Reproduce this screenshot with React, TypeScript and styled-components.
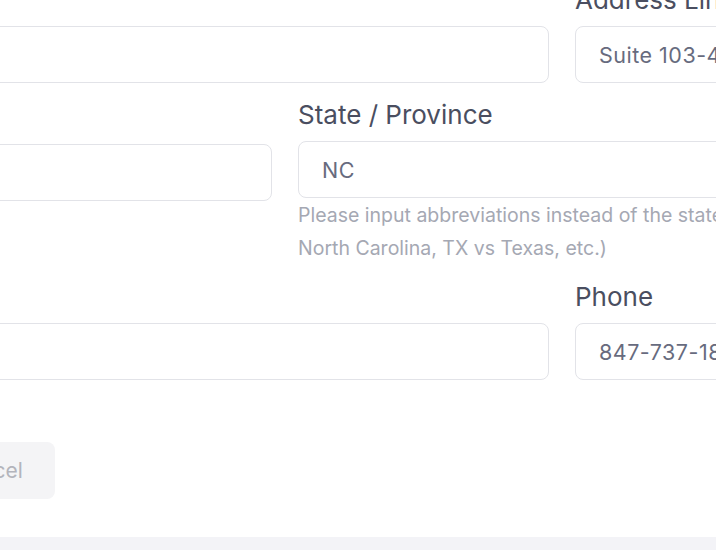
import React from "react";
import styled, { createGlobalStyle } from "styled-components";

const Global = createGlobalStyle`
  html, body { margin: 0; padding: 0; background: #f3f3f7; overflow: hidden; }
  body { font-family: Inter, "Noto Sans", "Liberation Sans", sans-serif; }
  * { box-sizing: border-box; }
`;

const Page = styled.div`
  width: 716px;
  height: 550px;
  overflow: hidden;
  background: #f3f3f7;
`;

const Card = styled.div`
  background: #ffffff;
  width: 1082px;
  margin-left: -256px;
  padding-bottom: 38px;
`;

const Grid = styled.div`
  display: grid;
  grid-template-columns: repeat(4, 251px);
  column-gap: 26px;
  row-gap: 16px;
  margin-top: -16px;
`;

const Field = styled.div<{ $span: number }>`
  grid-column: span ${(p) => p.$span};
  display: flex;
  flex-direction: column;
`;

const Label = styled.label`
  font-size: 26px;
  line-height: 32px;
  color: #4a4e60;
  margin-bottom: 10px;
  white-space: nowrap;
`;

const Input = styled.input<{ $shift?: number }>`
  height: 57px;
  margin-top: ${(p) => p.$shift ?? 0}px;
  border: 1px solid #e2e3e8;
  border-radius: 8px;
  padding: 0 23px;
  font-family: inherit;
  font-size: 21.5px;
  letter-spacing: 0.5px;
  color: #676b7e;
  background: #ffffff;
  outline: none;
`;

const Help = styled.p`
  margin: 1px 0 0;
  font-size: 19.5px;
  line-height: 33px;
  color: #a5a8b3;
  white-space: nowrap;
`;

const Actions = styled.div`
  display: flex;
  margin-top: 62px;
  padding-left: 178px;
`;

const Button = styled.button`
  height: 57px;
  padding: 0 32px;
  border: none;
  border-radius: 8px;
  background: #f4f4f6;
  color: #b3b4bc;
  font-family: inherit;
  font-size: 21px;
`;

export default function App() {
  return (
    <Page>
      <Global />
      <Card>
        <Grid>
          <Field $span={3}>
            <Label>Address Line 1</Label>
            <Input defaultValue="" />
          </Field>
          <Field $span={1}>
            <Label>Address Line 2</Label>
            <Input defaultValue="Suite 103-450" />
          </Field>
          <Field $span={2}>
            <Label>City</Label>
            <Input defaultValue="" $shift={3} />
          </Field>
          <Field $span={2}>
            <Label>State / Province</Label>
            <Input defaultValue="NC" />
            <Help>
              Please input abbreviations instead of the state name (e.g. NC vs
              <br />
              North Carolina, TX vs Texas, etc.)
            </Help>
          </Field>
          <Field $span={3}>
            <Label>Email</Label>
            <Input defaultValue="" />
          </Field>
          <Field $span={1}>
            <Label>Phone</Label>
            <Input defaultValue="847-737-1800" />
          </Field>
        </Grid>
        <Actions>
          <Button type="button">Cancel</Button>
        </Actions>
      </Card>
    </Page>
  );
}
